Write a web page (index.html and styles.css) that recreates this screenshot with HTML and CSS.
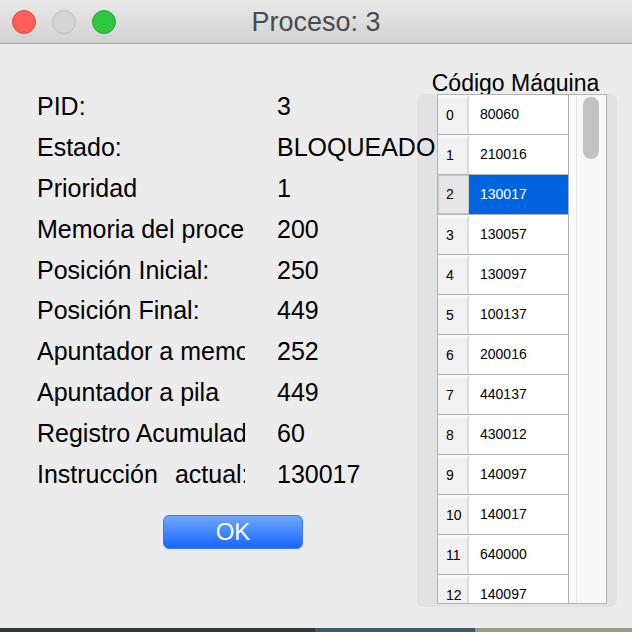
FILE: index.html
```html
<!DOCTYPE html>
<html lang="es">
<head>
<meta charset="utf-8">
<title>Proceso: 3</title>
<link rel="stylesheet" href="styles.css">
</head>
<body>
<div class="window">
  <div class="titlebar">
    <div class="lights">
      <span class="light red"></span>
      <span class="light gray"></span>
      <span class="light green"></span>
    </div>
    <div class="title">Proceso: 3</div>
  </div>
  <div class="content">
    <div class="info">
      <div class="row"><span class="label">PID:</span><span class="value">3</span></div>
      <div class="row"><span class="label">Estado:</span><span class="value">BLOQUEADO</span></div>
      <div class="row"><span class="label">Prioridad</span><span class="value">1</span></div>
      <div class="row"><span class="label">Memoria del proceso:</span><span class="value">200</span></div>
      <div class="row"><span class="label">Posición Inicial:</span><span class="value">250</span></div>
      <div class="row"><span class="label">Posición Final:</span><span class="value">449</span></div>
      <div class="row"><span class="label">Apuntador a memoria:</span><span class="value">252</span></div>
      <div class="row"><span class="label">Apuntador a pila</span><span class="value">449</span></div>
      <div class="row"><span class="label">Registro Acumulador:</span><span class="value">60</span></div>
      <div class="row"><span class="label">Instrucción<span class="sp"> </span>actual:</span><span class="value">130017</span></div>
      <button class="ok">OK</button>
    </div>
    <div class="code">
      <div class="code-title">Código Máquina</div>
      <div class="panel">
        <div class="pane">
          <div class="table">
            <div class="trow"><span class="rh">0</span><span class="cell">80060</span></div>
            <div class="trow"><span class="rh">1</span><span class="cell">210016</span></div>
            <div class="trow sel"><span class="rh">2</span><span class="cell">130017</span></div>
            <div class="trow"><span class="rh">3</span><span class="cell">130057</span></div>
            <div class="trow"><span class="rh">4</span><span class="cell">130097</span></div>
            <div class="trow"><span class="rh">5</span><span class="cell">100137</span></div>
            <div class="trow"><span class="rh">6</span><span class="cell">200016</span></div>
            <div class="trow"><span class="rh">7</span><span class="cell">440137</span></div>
            <div class="trow"><span class="rh">8</span><span class="cell">430012</span></div>
            <div class="trow"><span class="rh">9</span><span class="cell">140097</span></div>
            <div class="trow"><span class="rh">10</span><span class="cell">140017</span></div>
            <div class="trow"><span class="rh">11</span><span class="cell">640000</span></div>
            <div class="trow"><span class="rh">12</span><span class="cell">140097</span></div>
          </div>
          <div class="gap"></div>
          <div class="scrollbar"><div class="thumb"></div></div>
        </div>
      </div>
    </div>
  </div>
</div>
<div class="desktop"></div>
</body>
</html>
```
FILE: styles.css
```css
* { box-sizing: border-box; }
html, body { margin: 0; padding: 0; }
body {
  width: 632px;
  height: 632px;
  overflow: hidden;
  background: #ececec;
  font-family: "Liberation Sans", Arial, sans-serif;
  color: #000;
}
.window {
  height: 628px;
  overflow: hidden;
  background: #ececec;
}
.titlebar {
  height: 44px;
  background: linear-gradient(#e9e9e9, #d2d2d2);
  border-bottom: 1px solid #a3a3a3;
  display: flex;
  align-items: center;
  justify-content: center;
  position: relative;
}
.lights {
  position: absolute;
  left: 12px;
  top: 10px;
  display: flex;
  gap: 16px;
}
.light {
  width: 24px;
  height: 24px;
  border-radius: 50%;
  display: block;
}
.red { background: #fe5f57; border: 1px solid #e0443e; }
.gray { background: #d5d5d5; border: 1px solid #bdbdbd; }
.green { background: #2cc840; border: 1px solid #1aab29; }
.title {
  font-size: 27px;
  color: #4a4a4a;
  line-height: 44px;
  margin-top: 1px;
}
.content {
  display: flex;
  height: 584px;
}
.info {
  width: 417px;
  flex: none;
  padding-top: 42px;
  padding-left: 37px;
  position: relative;
  z-index: 1;
}
.row {
  display: grid;
  grid-template-columns: 208px 160px;
  column-gap: 32px;
  height: 40.9px;
  line-height: 40.9px;
  font-size: 25px;
  white-space: nowrap;
}
.label, .value {
  overflow: hidden;
  display: block;
}
.sp {
  display: inline-block;
  width: 17px;
}
.ok {
  display: block;
  margin: 20px 0 0 126px;
  width: 140px;
  height: 34px;
  border: 1px solid #3a7af2;
  border-radius: 6px;
  background: linear-gradient(#6fa8fc, #1766fe);
  color: #fff;
  font-family: "Liberation Sans", Arial, sans-serif;
  font-size: 24px;
  line-height: 30px;
  padding: 0;
}
.code {
  width: 200px;
  flex: none;
}
.code-title {
  height: 56px;
  padding-top: 28px;
  line-height: 23px;
  font-size: 23px;
  text-align: center;
  white-space: nowrap;
  margin-left: -3px;
}
.panel {
  background: #e2e2e2;
  border-radius: 7px;
  height: 513px;
  padding: 0 10px 0 20px;
}
.pane {
  margin-top: -6px;
  height: 510px;
  border: 1px solid #b3b3b3;
  background: #fff;
  display: flex;
  overflow: hidden;
  position: relative;
  z-index: 2;
}
.table {
  width: 131px;
  flex: none;
  border-right: 1px solid #b0b0b0;
}
.trow {
  display: flex;
  height: 40px;
  border-bottom: 1px solid #b4b4b4;
  font-size: 14px;
  line-height: 39px;
}
.rh {
  width: 31px;
  flex: none;
  padding-left: 8px;
  background: #f1f1f1;
  border-right: 2px solid #dcdcdc;
  border-top: 3px solid #fafafa;
  line-height: 35px;
}
.cell {
  flex: 1;
  padding-left: 11px;
}
.sel .rh {
  background: #e6e6e6;
  border: 1px solid #c8c8c8;
  line-height: 37px;
  padding-left: 7px;
}
.sel .cell {
  background: #0064e1;
  color: #fff;
}
.gap {
  width: 8px;
  flex: none;
  background: #fbfbfb;
  border-right: 1px solid #e6e6e6;
}
.scrollbar {
  flex: 1;
  background: #f8f8f8;
  padding: 2px 0 0 6px;
}
.thumb {
  width: 16px;
  height: 62px;
  border-radius: 8px;
  background: #c2c2c2;
}
.desktop {
  height: 4px;
  background: linear-gradient(90deg, #2d3a40 0, #2d3a40 315px, #3e5a66 315px, #3e5a66 475px, #9e9c82 475px);
}
```
